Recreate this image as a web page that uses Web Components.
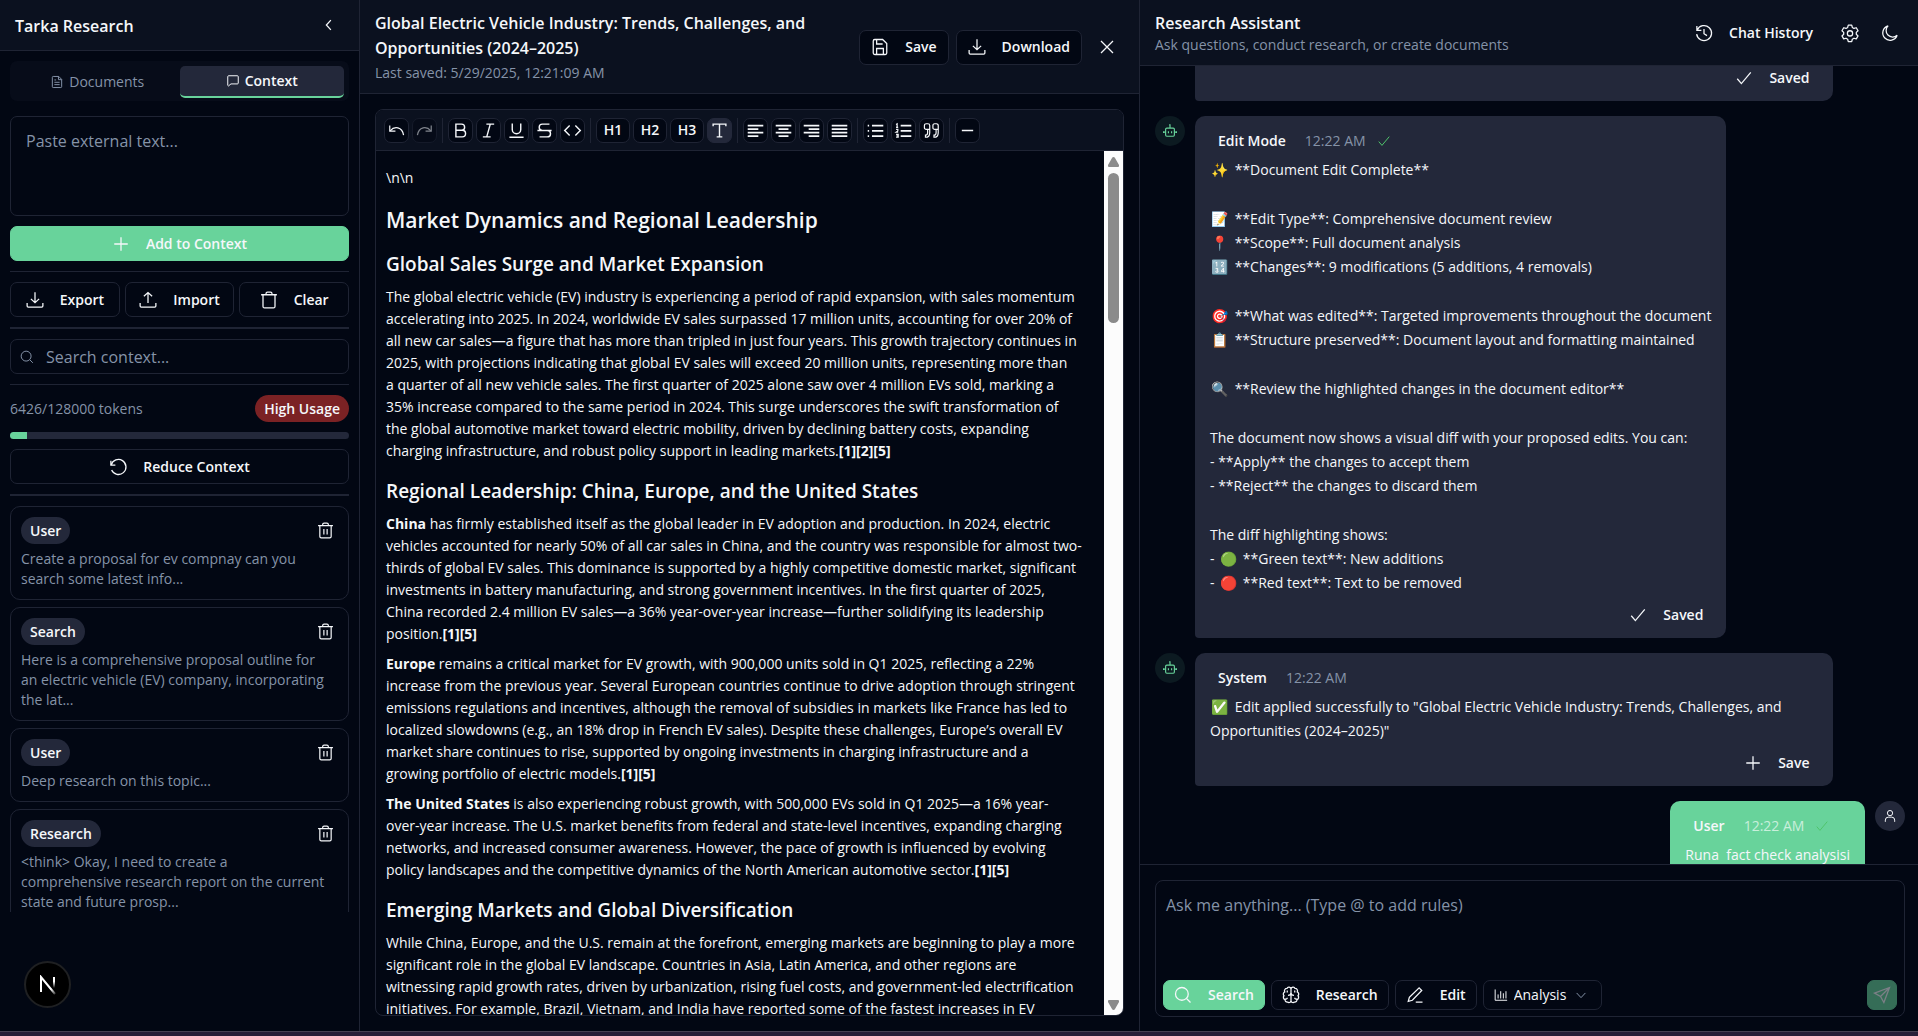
<!DOCTYPE html>
<html lang="en">
<head>
<meta charset="UTF-8">
<meta name="viewport" content="width=device-width, initial-scale=1.0">
<title>Tarka Research</title>
<style>
    :root {
        --bg: #020713;
        --panel: #0b111f;
        --muted: #23283a;
        --border: #1f2434;
        --fg: #f5f7fa;
        --muted-fg: #8593a8;
        --primary: #68d39b;
        --danger: #7b2224;
    }
    html, body {
        height: 100%;
        margin: 0;
    }
    body {
        background: var(--bg);
        color: var(--fg);
        font: 14px/20px "Open Sans", "Noto Sans", "Noto Color Emoji", sans-serif;
    }
</style>
</head>
<body>
<research-app></research-app>

<script>
const ICONS = {
    'chevron-left': '<path d="M14.5 5.5 8.5 12l6 6.5"/>',
    'chevron-down': '<path d="m4.5 8.5 7.5 8 7.5-8"/>',
    file: '<path d="M15 2.5H5.5A1.5 1.5 0 0 0 4 4v16a1.5 1.5 0 0 0 1.500 1.500h13A1.500 1.500 0 0 0 20 20V7.500zM14.500 2.500V8H20M7.500 8.500h3M7.500 12.500h9M7.500 16.500h9"/>',
    message: '<path d="M3 19.500V4.500A1.500 1.500 0 0 1 4.500 3h15A1.500 1.500 0 0 1 21 4.500v11a1.500 1.500 0 0 1-1.500 1.500H8.500L4.200 20.500z"/>',
    plus: '<path d="M12 3v18M3 12h18"/>',
    minus: '<path d="M4 12h16" stroke-width="2"/>',
    download: '<path d="M12 1.500v14M6.500 10.500l5.500 5 5.500-5M1.500 16v4A1.500 1.500 0 0 0 3 21.500h18a1.500 1.500 0 0 0 1.500-1.500v-4"/>',
    upload: '<path d="M12 16V2M6.500 7 12 2l5.500 5M1.500 16v4A1.500 1.500 0 0 0 3 21.500h18a1.500 1.500 0 0 0 1.500-1.500v-4"/>',
    trash: '<path d="M1.500 5h21M8 5V3.500A2 2 0 0 1 10 1.500h4a2 2 0 0 1 2 2V5M4 5v15.500A2 2 0 0 0 6 22.500h12a2 2 0 0 0 2-2V5"/>',
    'trash-lines': '<path d="M1.500 5h21M8 5V3.500A2 2 0 0 1 10 1.500h4a2 2 0 0 1 2 2V5M4 5v15.500A2 2 0 0 0 6 22.500h12a2 2 0 0 0 2-2V5M9.700 10v7.500M14.300 10v7.500"/>',
    search: '<circle cx="10.500" cy="10.500" r="8.500"/><path d="m17 17 5 5"/>',
    undo: '<path d="M2.500 3.500v6h6"/><path d="M3 9.300A10 10 0 1 1 3.500 16"/>',
    save: '<path d="M15.500 2H5a2 2 0 0 0-2 2v16a2 2 0 0 0 2 2h14a2 2 0 0 0 2-2V7.500zM7.500 22v-8h9v8M7.500 2v6h8"/>',
    close: '<path d="m4 4 16 16M20 4 4 20"/>',
    history: '<path d="M2.500 2.500v6h6M3 8a10 10 0 1 1-.800 5.500M12 6.500V13l4 2.500"/>',
    gear: '<path d="M9.700 1.500h4.600l.8 3.100 2.200 1.300 3.100-.9 2.300 4-2.300 2.200v2.500l2.300 2.200-2.300 4-3.100-.9-2.200 1.300-.8 3.100H9.700l-.8-3.100-2.200-1.300-3.100.9-2.300-4 2.300-2.200v-2.500L1.300 9l2.300-4 3.100.9 2.200-1.300z" stroke-linejoin="round"/><circle cx="12" cy="12.500" r="3.500"/>',
    moon: '<path d="M9.500 2.500A9.800 9.800 0 1 0 21.500 15 8.600 8.600 0 0 1 9.500 2.500z"/>',
    check: '<path d="m3 13 5.500 6.500L21 4.500"/>',
    bot: '<path d="M10.500 1.500H12V6.500M4.500 9A2 2 0 0 1 6.500 7h11a2 2 0 0 1 2 2v10a2 2 0 0 1-2 2h-11a2 2 0 0 1-2-2zM1 15.500v-3M23 15.500v-3M1 14h3.500M19.500 14H23M9.300 12.500v3.500M14.700 12.500v3.500" stroke-width="2"/>',
    user: '<circle cx="12" cy="7" r="4.500"/><path d="M4 22v-3a5 5 0 0 1 5-5h6a5 5 0 0 1 5 5v3"/>',
    brain: '<path d="M12 2.500v19M12 4a2.800 2.800 0 0 0-5.400-.8 3.200 3.200 0 0 0-3 4.600 3.300 3.300 0 0 0-1 5.200 3.300 3.300 0 0 0 1.400 5.200 3 3 0 0 0 3.400 3.200A2.800 2.800 0 0 0 12 20M12 4a2.800 2.800 0 0 1 5.400-.8 3.200 3.200 0 0 1 3 4.600 3.300 3.300 0 0 1 1 5.200 3.300 3.300 0 0 1-1.400 5.200 3 3 0 0 1-3.400 3.200A2.800 2.800 0 0 1 12 20M8 12.500c2.500 0 4-1.500 4-3.500 0 2 1.500 3.500 4 3.500M7 8.500V6M17 8.500V6M4 17.500c2 0 3-.8 3-2M20 17.500c-2 0-3-.8-3-2"/>',
    edit: '<path d="M17.500 2.500 21 6 8.500 19l-5.500 1.500L4.500 15zM13 21.500h9"/>',
    chart: '<path d="M2 2.500V21h20.500M7 11v7M11.500 5.500V18M16 9v9M20.500 5.500V18"/>',
    send: '<path d="M22 2 2 9.500l8 4.500 4.500 8zM22 2 10 14"/>',
    'undo-arrow': '<path d="M2.500 5v8h8"/><path d="M3 12.500C9 5.500 20 6.500 22 18.500"/>',
    'redo-arrow': '<path d="M21.500 5v8h-8"/><path d="M21 12.500C15 5.500 4 6.500 2 18.500"/>',
    bold: '<path d="M5.500 3h8a4.300 4.300 0 0 1 0 8.700h-8zM5.500 11.700h9a4.500 4.500 0 0 1 0 9.300h-9z" stroke-width="2"/>',
    italic: '<path d="M9 3h11M4 21h11M14.500 3l-5 18" stroke-width="2"/>',
    underline: '<path d="M6 2v8.500a6 6 0 0 0 12 0V2M2 21.500h20" stroke-width="2"/>',
    strike: '<path d="M19 3H9a4.500 4.500 0 0 0 0 9h7a4.500 4.500 0 0 1 0 9H5M2 12h20" stroke-width="2"/>',
    code: '<path d="m8 5-7 7 7 7M16 5l7 7-7 7" stroke-width="2"/>',
    type: '<path d="M3 6V3h18v3M12 3v18M8 21h8" stroke-width="2"/>',
    'align-left': '<path d="M1 5h22M1 10h15M1 15h22M1 20h15" stroke-width="2.400"/>',
    'align-center': '<path d="M1 5h22M5 10h14M1 15h22M5 20h14" stroke-width="2.400"/>',
    'align-right': '<path d="M1 5h22M8 10h15M1 15h22M8 20h15" stroke-width="2.400"/>',
    'align-justify': '<path d="M1 5h22M1 10h22M1 15h22M1 20h22" stroke-width="2.400"/>',
    bullets: '<path d="M7 5h16M7 12.500h16M7 20h16" stroke-width="2.400"/><path d="M1 5h2M1 12.500h2M1 20h2" stroke-width="2.400"/>',
    numbers: '<path d="M8 5h15M8 12.500h15M8 20h15" stroke-width="2.400"/><path d="M1.500 3.500 3 2.500v5M1.500 7.500h3M1.500 10.500h2.500v2l-2.500 2h3M1.500 17.500h3v4h-3M2 19.500h2.500"/>',
    quote: '<path d="M9.500 10.500H4.500A2.500 2.500 0 0 1 2 8V5a2.500 2.500 0 0 1 2.500-2.500H7A2.500 2.500 0 0 1 9.500 5v10c0 4-2 6.500-6 6.500v-3c2 0 3-1 3-3.500v-4.500M21.500 10.500h-5A2.500 2.500 0 0 1 14 8V5a2.500 2.500 0 0 1 2.500-2.500H19A2.500 2.500 0 0 1 21.500 5v10c0 4-2 6.500-6 6.500v-3c2 0 3-1 3-3.500v-4.500"/>'
};

class UiIcon extends HTMLElement {
    connectedCallback() {
        this.attachShadow({ mode: 'open' });
        this.shadowRoot.innerHTML = `
            <style>
                :host {
                    display: inline-block;
                    flex: none;
                    width: var(--icon-size, 18px);
                    height: var(--icon-size, 18px);
                }
                svg {
                    display: block;
                    width: 100%;
                    height: 100%;
                    fill: none;
                    stroke: currentColor;
                    stroke-width: 1.7;
                    overflow: visible;
                }
            </style>
            <svg viewBox="0 0 24 24" aria-hidden="true">${ICONS[this.getAttribute('name')] || ''}</svg>
        `;
    }
}

class UiButton extends HTMLElement {
    connectedCallback() {
        const icon = this.getAttribute('icon');
        const label = this.getAttribute('label');
        const disabled = this.hasAttribute('disabled') ? 'disabled' : '';
        this.attachShadow({ mode: 'open' });
        this.shadowRoot.innerHTML = `
            <style>
                :host {
                    display: block;
                }
                button {
                    box-sizing: border-box;
                    display: flex;
                    align-items: center;
                    justify-content: center;
                    gap: 16px;
                    width: 100%;
                    height: 35px;
                    margin: 0;
                    padding: 0 11px;
                    border: 1px solid var(--border);
                    border-radius: 7px;
                    background: var(--bg);
                    color: var(--fg);
                    font: inherit;
                    font-weight: 600;
                    white-space: nowrap;
                    cursor: pointer;
                }
                :host([variant="primary"]) button {
                    background: var(--primary);
                    border-color: var(--primary);
                }
                :host([variant="ghost"]) button {
                    background: transparent;
                    border-color: transparent;
                }
                :host([size="small"]) button {
                    height: 30px;
                    padding: 0 10px;
                }
                :host([size="small"][variant="ghost"]) button {
                    padding: 0 7px;
                }
                :host([size="icon"]) button {
                    padding: 0;
                    width: 30px;
                    height: 30px;
                }
                :host([size="icon-lg"]) button {
                    padding: 0;
                    width: 35px;
                }
                :host([size="tool"]) button {
                    padding: 0;
                    width: 25px;
                    height: 25px;
                    --icon-size: 17px;
                }
                :host([size="heading"]) button {
                    padding: 0;
                    width: 34px;
                    height: 25px;
                }
                :host([active]) button {
                    background: var(--muted);
                    border-color: var(--muted);
                }
                button:disabled {
                    opacity: 0.5;
                    cursor: default;
                }
            </style>
            <button type="button" ${label ? `aria-label="${label}"` : ''} ${disabled}>
                ${icon ? `<ui-icon name="${icon}"></ui-icon>` : ''}
                ${label ? '' : '<slot></slot>'}
            </button>
        `;
    }
}

class UiBadge extends HTMLElement {
    connectedCallback() {
        this.attachShadow({ mode: 'open' });
        this.shadowRoot.innerHTML = `
            <style>
                :host {
                    display: inline-block;
                    padding: 0 9px;
                    border-radius: 14px;
                    background: var(--muted);
                    line-height: 27px;
                    font-weight: 600;
                }
                :host([variant="danger"]) {
                    background: var(--danger);
                }
            </style>
            <slot></slot>
        `;
    }
}

class ContextCard extends HTMLElement {
    connectedCallback() {
        this.attachShadow({ mode: 'open' });
        this.shadowRoot.innerHTML = `
            <style>
                :host {
                    display: block;
                    padding: 10px;
                    border: 1px solid var(--border);
                    border-radius: 10px;
                }
                .top {
                    display: flex;
                    justify-content: space-between;
                    align-items: center;
                    height: 27px;
                    margin-bottom: 5px;
                }
                p {
                    margin: 0;
                    color: var(--muted-fg);
                }
            </style>
            <div class="top">
                <ui-badge>${this.getAttribute('source')}</ui-badge>
                <ui-button size="tool" variant="ghost" icon="trash-lines" label="Remove"></ui-button>
            </div>
            <p><slot></slot></p>
        `;
    }
}

class ContextSidebar extends HTMLElement {
    connectedCallback() {
        this.attachShadow({ mode: 'open' });
        this.shadowRoot.innerHTML = `
            <style>
                :host {
                    display: flex;
                    flex-direction: column;
                    min-height: 0;
                    border-right: 1px solid var(--border);
                }
                header {
                    display: flex;
                    align-items: center;
                    justify-content: space-between;
                    height: 50px;
                    padding: 0 15px;
                    background: var(--panel);
                    border-bottom: 1px solid var(--border);
                }
                h1 {
                    margin: 0;
                    padding-top: 2px;
                    font-size: 16px;
                    font-weight: 600;
                }
                .body {
                    flex: 1;
                    min-height: 0;
                    display: flex;
                    flex-direction: column;
                    gap: 10px;
                    padding: 10px 10px 0;
                }
                .tabs {
                    display: grid;
                    grid-template-columns: 1fr 1fr;
                    padding: 5px 5px 3px;
                    margin-bottom: 5px;
                    border-radius: 7px;
                    background: #070c19;
                }
                .tabs button {
                    display: flex;
                    align-items: center;
                    justify-content: center;
                    gap: 5px;
                    height: 32px;
                    padding: 0;
                    border: 0;
                    background: none;
                    color: var(--muted-fg);
                    font: inherit;
                    font-weight: 500;
                    --icon-size: 14px;
                }
                .tabs button[aria-selected="true"] {
                    background: var(--muted);
                    border-bottom: 2px solid var(--primary);
                    border-radius: 5px;
                    color: var(--fg);
                    font-weight: 600;
                }
                textarea {
                    box-sizing: border-box;
                    height: 100px;
                    padding: 12px 15px;
                    resize: none;
                }
                textarea, input {
                    border: 1px solid var(--border);
                    border-radius: 7px;
                    background: none;
                    color: var(--fg);
                    font: inherit;
                    font-size: 16px;
                    line-height: 24px;
                }
                ::placeholder {
                    color: var(--muted-fg);
                    opacity: 1;
                }
                hr {
                    width: 100%;
                    height: 1px;
                    margin: 0;
                    border: 0;
                    background: var(--border);
                }
                hr.thick {
                    height: 2px;
                }
                .row {
                    display: grid;
                    grid-template-columns: repeat(3, 1fr);
                    gap: 5px;
                }
                .search {
                    display: grid;
                    align-items: center;
                    --icon-size: 14px;
                    color: var(--muted-fg);
                }
                .search > * {
                    grid-area: 1 / 1;
                }
                .search ui-icon {
                    margin-left: 10px;
                }
                .search input {
                    box-sizing: border-box;
                    width: 100%;
                    height: 35px;
                    padding: 0 35px;
                }
                .usage {
                    display: flex;
                    justify-content: space-between;
                    align-items: center;
                    color: var(--muted-fg);
                }
                .usage ui-badge {
                    color: var(--fg);
                }
                .bar {
                    height: 7px;
                    border-radius: 4px;
                    overflow: hidden;
                    background: var(--muted);
                }
                .bar div {
                    width: 5%;
                    height: 100%;
                    background: var(--primary);
                }
                .list {
                    flex: 1;
                    min-height: 0;
                    overflow: hidden;
                    display: flex;
                    flex-direction: column;
                    gap: 7px;
                }
                .list context-card {
                    flex: none;
                }
                footer {
                    height: 70px;
                    padding: 49px 24px 0;
                }
                .dev {
                    width: 47px;
                    height: 47px;
                    padding: 0;
                    border: 2px solid #1f2022;
                    border-radius: 50%;
                    background: #000;
                    display: grid;
                    place-items: center;
                }
            </style>
            <header>
                <h1>Tarka Research</h1>
                <ui-button size="icon" variant="ghost" icon="chevron-left" label="Collapse sidebar"></ui-button>
            </header>
            <div class="body">
                <div class="tabs" role="tablist">
                    <button type="button" role="tab" aria-selected="false"><ui-icon name="file"></ui-icon>Documents</button>
                    <button type="button" role="tab" aria-selected="true"><ui-icon name="message"></ui-icon>Context</button>
                </div>
                <textarea aria-label="External text" placeholder="Paste external text..."></textarea>
                <ui-button variant="primary" icon="plus">Add to Context</ui-button>
                <hr>
                <div class="row">
                    <ui-button icon="download">Export</ui-button>
                    <ui-button icon="upload">Import</ui-button>
                    <ui-button icon="trash">Clear</ui-button>
                </div>
                <hr class="thick">
                <div class="search">
                    <ui-icon name="search"></ui-icon>
                    <input type="text" aria-label="Search context" placeholder="Search context...">
                </div>
                <hr>
                <div class="usage">
                    <span>6426/128000 tokens</span>
                    <ui-badge variant="danger">High Usage</ui-badge>
                </div>
                <div class="bar" role="progressbar" aria-label="Token usage" aria-valuenow="5"><div></div></div>
                <ui-button icon="undo">Reduce Context</ui-button>
                <hr class="thick">
                <div class="list">
                    <context-card source="User">Create a proposal for ev compnay can you<br>search some latest info...</context-card>
                    <context-card source="Search">Here is a comprehensive proposal outline for<br>an electric vehicle (EV) company, incorporating<br>the lat...</context-card>
                    <context-card source="User">Deep research on this topic...</context-card>
                    <context-card source="Research">&lt;think&gt; Okay, I need to create a<br>comprehensive research report on the current<br>state and future prosp...</context-card>
                </div>
            </div>
            <footer>
                <button type="button" class="dev" aria-label="Open dev tools">
                    <svg width="18" height="20" viewBox="0 0 18 20" fill="none">
                        <defs>
                            <linearGradient id="a" x1="0" y1="0" x2="0" y2="1"><stop offset="0.4" stop-color="#fff"/><stop offset="1" stop-color="#fff" stop-opacity="0"/></linearGradient>
                            <linearGradient id="b" x1="9" y1="10" x2="17" y2="20" gradientUnits="userSpaceOnUse"><stop offset="0.4" stop-color="#fff"/><stop offset="1" stop-color="#fff" stop-opacity="0.1"/></linearGradient>
                        </defs>
                        <path d="M2 17V2l14 17" stroke="url(#b)" stroke-width="2"/>
                        <rect x="14" y="2" width="2" height="11" fill="url(#a)"/>
                    </svg>
                </button>
            </footer>
        `;
    }
}

class EditorToolbar extends HTMLElement {
    connectedCallback() {
        const tool = (icon, label, extra = '') =>
            `<ui-button size="tool" icon="${icon}" label="${label}" ${extra}></ui-button>`;
        this.attachShadow({ mode: 'open' });
        this.shadowRoot.innerHTML = `
            <style>
                :host {
                    display: flex;
                    align-items: center;
                    gap: 3px;
                    height: 40px;
                    padding: 0 8px;
                    background: var(--panel);
                    border-bottom: 1px solid var(--border);
                }
                i {
                    width: 1px;
                    height: 25px;
                    margin: 0 2px;
                    background: var(--border);
                }
            </style>
            ${tool('undo-arrow', 'Undo')}
            ${tool('redo-arrow', 'Redo', 'disabled')}
            <i></i>
            ${tool('bold', 'Bold')}
            ${tool('italic', 'Italic')}
            ${tool('underline', 'Underline')}
            ${tool('strike', 'Strikethrough')}
            ${tool('code', 'Code')}
            <i></i>
            <ui-button size="heading">H1</ui-button>
            <ui-button size="heading">H2</ui-button>
            <ui-button size="heading">H3</ui-button>
            ${tool('type', 'Paragraph', 'active')}
            <i></i>
            ${tool('align-left', 'Align left')}
            ${tool('align-center', 'Align center')}
            ${tool('align-right', 'Align right')}
            ${tool('align-justify', 'Justify')}
            <i></i>
            ${tool('bullets', 'Bullet list')}
            ${tool('numbers', 'Numbered list')}
            ${tool('quote', 'Quote')}
            <i></i>
            ${tool('minus', 'Horizontal rule')}
        `;
    }
}

class DocScrollbar extends HTMLElement {
    connectedCallback() {
        this.attachShadow({ mode: 'open' });
        this.shadowRoot.innerHTML = `
            <style>
                :host {
                    display: flex;
                    flex-direction: column;
                    align-items: center;
                    flex: none;
                    width: 19px;
                    background: #fcfcfc;
                }
                svg {
                    flex: none;
                    fill: #8b8b8b;
                }
                .track {
                    flex: 1;
                }
                .thumb {
                    width: 11px;
                    height: 150px;
                    border-radius: 6px;
                    background: #8b8b8b;
                }
            </style>
            <svg width="19" height="22" viewBox="0 0 19 22"><path d="M9.500 6q1 0 1.500 1l4 7q.5 2-1 2H5q-1.500 0-1-2l4-7q.5-1 1.500-1z"/></svg>
            <div class="track"><div class="thumb"></div></div>
            <svg width="19" height="22" viewBox="0 0 19 22"><path d="M9.500 17q1 0 1.500-1l4-7q.5-2-1-2H5q-1.500 0-1 2l4 7q.5 1 1.500 1z"/></svg>
        `;
    }
}

class DocumentEditor extends HTMLElement {
    connectedCallback() {
        this.attachShadow({ mode: 'open' });
        this.shadowRoot.innerHTML = `
            <style>
                :host {
                    display: flex;
                    flex-direction: column;
                    min-width: 0;
                    min-height: 0;
                    border-right: 1px solid var(--border);
                }
                header {
                    display: flex;
                    align-items: center;
                    gap: 7px;
                    padding: 11px 15px 10px;
                    background: var(--panel);
                    border-bottom: 1px solid var(--border);
                }
                .title {
                    flex: 1;
                    min-width: 0;
                }
                h1 {
                    margin: 0 0 2px;
                    font-size: 16px;
                    line-height: 25px;
                    font-weight: 600;
                }
                .title p {
                    margin: 0;
                    color: var(--muted-fg);
                }
                .body {
                    flex: 1;
                    min-height: 0;
                    display: flex;
                    padding: 15px;
                }
                .frame {
                    flex: 1;
                    min-width: 0;
                    display: flex;
                    flex-direction: column;
                    overflow: hidden;
                    border: 1px solid var(--border);
                    border-radius: 8px;
                }
                .page {
                    flex: 1;
                    min-height: 0;
                    display: flex;
                }
                article {
                    flex: 1;
                    min-width: 0;
                    overflow: hidden;
                    padding: 16px 10px 0;
                    line-height: 22px;
                }
                article p {
                    margin: 0 0 8px;
                }
                article h2 {
                    margin: 16px 0;
                    font-size: 21px;
                    line-height: 30px;
                    font-weight: 600;
                }
                article h3 {
                    margin: 16px 0 9px;
                    font-size: 19px;
                    line-height: 26px;
                    font-weight: 600;
                }
            </style>
            <header>
                <div class="title">
                    <h1>Global Electric Vehicle Industry: Trends, Challenges, and<br>Opportunities (2024–2025)</h1>
                    <p>Last saved: 5/29/2025, 12:21:09 AM</p>
                </div>
                <ui-button icon="save">Save</ui-button>
                <ui-button icon="download">Download</ui-button>
                <ui-button size="icon-lg" variant="ghost" icon="close" label="Close"></ui-button>
            </header>
            <div class="body">
                <div class="frame">
                    <editor-toolbar></editor-toolbar>
                    <div class="page">
                        <article>
                            <p>\\n\\n</p>
                            <h2>Market Dynamics and Regional Leadership</h2>
                            <h3>Global Sales Surge and Market Expansion</h3>
                            <p>The global electric vehicle (EV) industry is experiencing a period of rapid expansion, with sales momentum<br>
                            accelerating into 2025. In 2024, worldwide EV sales surpassed 17 million units, accounting for over 20% of<br>
                            all new car sales—a figure that has more than tripled in just four years. This growth trajectory continues in<br>
                            2025, with projections indicating that global EV sales will exceed 20 million units, representing more than<br>
                            a quarter of all new vehicle sales. The first quarter of 2025 alone saw over 4 million EVs sold, marking a<br>
                            35% increase compared to the same period in 2024. This surge underscores the swift transformation of<br>
                            the global automotive market toward electric mobility, driven by declining battery costs, expanding<br>
                            charging infrastructure, and robust policy support in leading markets.<strong>[1][2][5]</strong></p>
                            <h3>Regional Leadership: China, Europe, and the United States</h3>
                            <p><strong>China</strong> has firmly established itself as the global leader in EV adoption and production. In 2024, electric<br>
                            vehicles accounted for nearly 50% of all car sales in China, and the country was responsible for almost two-<br>
                            thirds of global EV sales. This dominance is supported by a highly competitive domestic market, significant<br>
                            investments in battery manufacturing, and strong government incentives. In the first quarter of 2025,<br>
                            China recorded 2.4 million EV sales—a 36% year-over-year increase—further solidifying its leadership<br>
                            position.<strong>[1][5]</strong></p>
                            <p><strong>Europe</strong> remains a critical market for EV growth, with 900,000 units sold in Q1 2025, reflecting a 22%<br>
                            increase from the previous year. Several European countries continue to drive adoption through stringent<br>
                            emissions regulations and incentives, although the removal of subsidies in markets like France has led to<br>
                            localized slowdowns (e.g., an 18% drop in French EV sales). Despite these challenges, Europe’s overall EV<br>
                            market share continues to rise, supported by ongoing investments in charging infrastructure and a<br>
                            growing portfolio of electric models.<strong>[1][5]</strong></p>
                            <p><strong>The United States</strong> is also experiencing robust growth, with 500,000 EVs sold in Q1 2025—a 16% year-<br>
                            over-year increase. The U.S. market benefits from federal and state-level incentives, expanding charging<br>
                            networks, and increased consumer awareness. However, the pace of growth is influenced by evolving<br>
                            policy landscapes and the competitive dynamics of the North American automotive sector.<strong>[1][5]</strong></p>
                            <h3>Emerging Markets and Global Diversification</h3>
                            <p>While China, Europe, and the U.S. remain at the forefront, emerging markets are beginning to play a more<br>
                            significant role in the global EV landscape. Countries in Asia, Latin America, and other regions are<br>
                            witnessing rapid growth rates, driven by urbanization, rising fuel costs, and government-led electrification<br>
                            initiatives. For example, Brazil, Vietnam, and India have reported some of the fastest increases in EV</p>
                        </article>
                        <doc-scrollbar></doc-scrollbar>
                    </div>
                </div>
            </div>
        `;
    }
}

class ChatMessage extends HTMLElement {
    connectedCallback() {
        const author = this.getAttribute('author');
        const action = this.getAttribute('action');
        const mine = this.hasAttribute('mine');
        this.attachShadow({ mode: 'open' });
        this.shadowRoot.innerHTML = `
            <style>
                :host {
                    display: flex;
                    flex: none;
                    gap: 10px;
                }
                :host([mine]) {
                    flex-direction: row-reverse;
                }
                .avatar {
                    flex: none;
                    width: 30px;
                    height: 30px;
                    border-radius: 50%;
                    display: grid;
                    place-items: center;
                    background: #0c1a21;
                    color: var(--primary);
                    --icon-size: 14px;
                }
                :host([mine]) .avatar {
                    background: var(--muted);
                    color: var(--fg);
                }
                .bubble {
                    max-width: 85%;
                    box-sizing: border-box;
                    padding: 15px 15px 8px;
                    border-radius: 10px 10px 10px 4px;
                    background: var(--muted);
                }
                :host([mine]) .bubble {
                    background: var(--primary);
                }
                :host([continued]) .avatar {
                    visibility: hidden;
                }
                :host([continued]) .bubble {
                    width: 85%;
                    padding-top: 0;
                    border-radius: 0 0 10px 4px;
                }
                .meta {
                    display: flex;
                    align-items: center;
                    height: 20px;
                    margin-bottom: 7px;
                    padding: 0 8px;
                    color: var(--muted-fg);
                    --icon-size: 14px;
                }
                .meta strong {
                    margin-right: 19px;
                    color: var(--fg);
                    font-weight: 600;
                }
                .meta ui-icon {
                    margin-left: 11px;
                    color: #4fc46b;
                }
                :host([mine]) .meta {
                    color: #c9efdb;
                }
                .text {
                    display: flex;
                    flex-direction: column;
                    gap: 25px;
                    line-height: 24px;
                    white-space: pre-wrap;
                }
                .actions {
                    display: flex;
                    justify-content: flex-end;
                    margin-top: 5px;
                }
                :host([continued]) .actions {
                    margin-top: 0;
                }
            </style>
            <div class="avatar"><ui-icon name="${mine ? 'user' : 'bot'}"></ui-icon></div>
            <div class="bubble">
                ${author ? `<div class="meta"><strong>${author}</strong>${this.getAttribute('time')}${this.hasAttribute('done') ? '<ui-icon name="check"></ui-icon>' : ''}</div>` : ''}
                <div class="text"><slot></slot></div>
                ${action ? `<div class="actions"><ui-button size="small" variant="ghost" icon="${action === 'Saved' ? 'check' : 'plus'}">${action}</ui-button></div>` : ''}
            </div>
        `;
    }
}

class ChatComposer extends HTMLElement {
    connectedCallback() {
        this.attachShadow({ mode: 'open' });
        this.shadowRoot.innerHTML = `
            <style>
                :host {
                    display: block;
                    padding: 15px 13px 14px 15px;
                    border-top: 1px solid var(--border);
                }
                form {
                    display: flex;
                    flex-direction: column;
                    border: 1px solid var(--border);
                    border-radius: 8px;
                }
                textarea {
                    height: 75px;
                    padding: 12px 10px;
                    border: 0;
                    background: none;
                    color: var(--fg);
                    font: inherit;
                    font-size: 16px;
                    line-height: 24px;
                    resize: none;
                }
                textarea::placeholder {
                    color: var(--muted-fg);
                    opacity: 1;
                }
                .tools {
                    display: flex;
                    gap: 6px;
                    padding: 0 7px 6px;
                }
                .tools > :last-child {
                    margin-left: auto;
                }
                .select {
                    display: grid;
                    grid-template-columns: auto 1fr auto;
                    align-items: center;
                    box-sizing: border-box;
                    width: 119px;
                    height: 30px;
                    padding: 0 13px 0 10px;
                    border: 1px solid var(--border);
                    border-radius: 7px;
                    --icon-size: 14px;
                }
                select {
                    appearance: none;
                    min-width: 0;
                    padding: 0 0 0 6px;
                    border: 0;
                    background: none;
                    color: var(--fg);
                    font: inherit;
                    font-weight: 500;
                }
                .select ui-icon:last-child {
                    color: var(--muted-fg);
                }
            </style>
            <form>
                <textarea aria-label="Message" placeholder="Ask me anything... (Type @ to add rules)"></textarea>
                <div class="tools">
                    <ui-button size="small" variant="primary" icon="search">Search</ui-button>
                    <ui-button size="small" icon="brain">Research</ui-button>
                    <ui-button size="small" icon="edit">Edit</ui-button>
                    <label class="select">
                        <ui-icon name="chart"></ui-icon>
                        <select aria-label="Mode"><option>Analysis</option></select>
                        <ui-icon name="chevron-down"></ui-icon>
                    </label>
                    <ui-button size="icon" variant="primary" icon="send" label="Send" disabled></ui-button>
                </div>
            </form>
        `;
    }
}

class ResearchAssistant extends HTMLElement {
    connectedCallback() {
        const em = (char) => `<span class="emoji">${char}</span>`;
        this.attachShadow({ mode: 'open' });
        this.shadowRoot.innerHTML = `
            <style>
                :host {
                    display: flex;
                    flex-direction: column;
                    min-width: 0;
                    min-height: 0;
                }
                header {
                    display: flex;
                    align-items: center;
                    justify-content: space-between;
                    height: 65px;
                    padding: 0 13px 0 15px;
                    background: var(--panel);
                    border-bottom: 1px solid var(--border);
                }
                h1 {
                    margin: 0;
                    font-size: 16px;
                    line-height: 24px;
                    font-weight: 600;
                }
                header p {
                    margin: 0;
                    color: var(--muted-fg);
                }
                nav {
                    display: flex;
                    align-items: center;
                    gap: 10px;
                }
                .log {
                    flex: 1;
                    min-height: 0;
                    overflow: hidden;
                    display: flex;
                    flex-direction: column;
                    gap: 15px;
                    padding: 0 13px 0 15px;
                }
                .log chat-message:first-child {
                    margin-top: -3px;
                }
                p.line {
                    margin: 0;
                }
                .emoji {
                    display: inline-block;
                    width: 21px;
                    text-align: center;
                }
            </style>
            <header>
                <div>
                    <h1>Research Assistant</h1>
                    <p>Ask questions, conduct research, or create documents</p>
                </div>
                <nav>
                    <ui-button variant="ghost" icon="history">Chat History</ui-button>
                    <ui-button size="icon" variant="ghost" icon="gear" label="Settings"></ui-button>
                    <ui-button size="icon" variant="ghost" icon="moon" label="Theme"></ui-button>
                </nav>
            </header>
            <div class="log">
                <chat-message continued action="Saved"></chat-message>
                <chat-message author="Edit Mode" time="12:22 AM" done action="Saved"><p class="line">${em('✨')} **Document Edit Complete**</p><p class="line">${em('📝')} **Edit Type**: Comprehensive document review
${em('📍')} **Scope**: Full document analysis
${em('🔢')} **Changes**: 9 modifications (5 additions, 4 removals)</p><p class="line">${em('🎯')} **What was edited**: Targeted improvements throughout the document
${em('📋')} **Structure preserved**: Document layout and formatting maintained</p><p class="line">${em('🔍')} **Review the highlighted changes in the document editor**</p><p class="line">The document now shows a visual diff with your proposed edits. You can:
- **Apply** the changes to accept them
- **Reject** the changes to discard them</p><p class="line">The diff highlighting shows:
- ${em('🟢')} **Green text**: New additions
- ${em('🔴')} **Red text**: Text to be removed</p></chat-message>
                <chat-message author="System" time="12:22 AM" action="Save"><p class="line">${em('✅')} Edit applied successfully to "Global Electric Vehicle Industry: Trends, Challenges, and Opportunities (2024–2025)"</p></chat-message>
                <chat-message mine author="User" time="12:22 AM" done><p class="line">Runa  fact check analysisi</p></chat-message>
            </div>
            <chat-composer></chat-composer>
        `;
    }
}

class ResearchApp extends HTMLElement {
    connectedCallback() {
        this.attachShadow({ mode: 'open' });
        this.shadowRoot.innerHTML = `
            <style>
                :host {
                    display: flex;
                    flex-direction: column;
                    height: 100vh;
                    overflow: hidden;
                }
                main {
                    flex: 1;
                    min-height: 0;
                    display: grid;
                    grid-template-columns: 360px minmax(0, 390fr) minmax(0, 389fr);
                    grid-template-rows: minmax(0, 1fr);
                }
                .strip {
                    height: 4px;
                    background: #281f38;
                    border-top: 1px solid #474152;
                }
            </style>
            <main>
                <context-sidebar></context-sidebar>
                <document-editor></document-editor>
                <research-assistant></research-assistant>
            </main>
            <div class="strip"></div>
        `;
    }
}

customElements.define('ui-icon', UiIcon);
customElements.define('ui-button', UiButton);
customElements.define('ui-badge', UiBadge);
customElements.define('context-card', ContextCard);
customElements.define('context-sidebar', ContextSidebar);
customElements.define('editor-toolbar', EditorToolbar);
customElements.define('doc-scrollbar', DocScrollbar);
customElements.define('document-editor', DocumentEditor);
customElements.define('chat-message', ChatMessage);
customElements.define('chat-composer', ChatComposer);
customElements.define('research-assistant', ResearchAssistant);
customElements.define('research-app', ResearchApp);
</script>
</body>
</html>
